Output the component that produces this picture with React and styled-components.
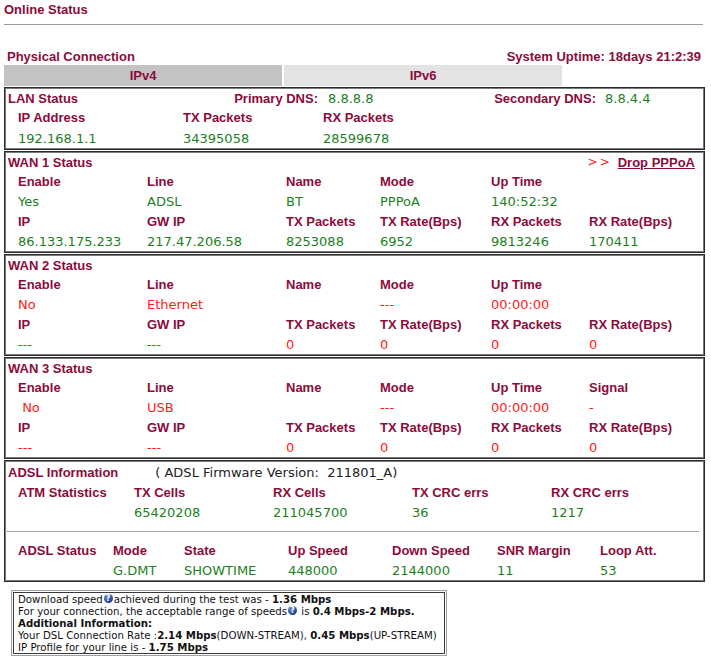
import styled, { createGlobalStyle } from 'styled-components'

const MAROON = '#8c0b3a'
const GREEN = '#1d7f1d'
const RED = '#ff1a1a'

const GlobalStyle = createGlobalStyle`
    body {
        margin: 0;
        background: #fff;
        font-family: "Liberation Sans", Arial, sans-serif;
    }
`

const wanCols = '129px 139px 94px 111px 98px 1fr'
const atmCols = '116px 139px 139px 139px 1fr'
const adslCols = '95px 71px 104px 104px 105px 103px 1fr'

const App = () => {
    return (
        <Page>
            <GlobalStyle />
            <PageTitle>Online Status</PageTitle>
            <Rule />

            <SectionBar>
                <Label>Physical Connection</Label>
                <Label>System Uptime: 18days 21:2:39</Label>
            </SectionBar>

            <Tabs>
                <Tab $active>IPv4</Tab>
                <Tab>IPv6</Tab>
            </Tabs>

            {/* LAN */}
            <Panel>
                <TitleRow>
                    <LanGrid>
                        <Label>LAN Status</Label>
                        <Label $right>Primary DNS:</Label>
                        <Value $tone="green" $indent={10}>8.8.8.8</Value>
                        <Label $right>Secondary DNS:</Label>
                        <Value $tone="green" $indent={9}>8.8.4.4</Value>
                    </LanGrid>
                </TitleRow>
                <Row $cols="165px 140px 1fr">
                    <Label>IP Address</Label>
                    <Label>TX Packets</Label>
                    <Label>RX Packets</Label>
                </Row>
                <Row $cols="165px 140px 1fr" $h={21}>
                    <Value $tone="green">192.168.1.1</Value>
                    <Value $tone="green">34395058</Value>
                    <Value $tone="green">28599678</Value>
                </Row>
            </Panel>

            {/* WAN 1 */}
            <Panel>
                <TitleRow>
                    <Label>WAN 1 Status</Label>
                    <DropLink>
                        <Arrows>&gt;&gt;</Arrows>
                        <u>Drop PPPoA</u>
                    </DropLink>
                </TitleRow>
                <Row $cols={wanCols}>
                    <Label>Enable</Label>
                    <Label>Line</Label>
                    <Label>Name</Label>
                    <Label>Mode</Label>
                    <Label>Up Time</Label>
                    <span />
                </Row>
                <Row $cols={wanCols}>
                    <Value $tone="green">Yes</Value>
                    <Value $tone="green">ADSL</Value>
                    <Value $tone="green">BT</Value>
                    <Value $tone="green">PPPoA</Value>
                    <Value $tone="green">140:52:32</Value>
                    <span />
                </Row>
                <Row $cols={wanCols}>
                    <Label>IP</Label>
                    <Label>GW IP</Label>
                    <Label>TX Packets</Label>
                    <Label>TX Rate(Bps)</Label>
                    <Label>RX Packets</Label>
                    <Label>RX Rate(Bps)</Label>
                </Row>
                <Row $cols={wanCols}>
                    <Value $tone="green">86.133.175.233</Value>
                    <Value $tone="green">217.47.206.58</Value>
                    <Value $tone="green">8253088</Value>
                    <Value $tone="green">6952</Value>
                    <Value $tone="green">9813246</Value>
                    <Value $tone="green">170411</Value>
                </Row>
            </Panel>

            {/* WAN 2 */}
            <Panel>
                <TitleRow>
                    <Label>WAN 2 Status</Label>
                </TitleRow>
                <Row $cols={wanCols}>
                    <Label>Enable</Label>
                    <Label>Line</Label>
                    <Label>Name</Label>
                    <Label>Mode</Label>
                    <Label>Up Time</Label>
                    <span />
                </Row>
                <Row $cols={wanCols}>
                    <Value $tone="red">No</Value>
                    <Value $tone="red">Ethernet</Value>
                    <Value $tone="red"></Value>
                    <Value $tone="red">---</Value>
                    <Value $tone="red">00:00:00</Value>
                    <span />
                </Row>
                <Row $cols={wanCols}>
                    <Label>IP</Label>
                    <Label>GW IP</Label>
                    <Label>TX Packets</Label>
                    <Label>TX Rate(Bps)</Label>
                    <Label>RX Packets</Label>
                    <Label>RX Rate(Bps)</Label>
                </Row>
                <Row $cols={wanCols}>
                    <Value $tone="red">---</Value>
                    <Value $tone="red">---</Value>
                    <Value $tone="red">0</Value>
                    <Value $tone="red">0</Value>
                    <Value $tone="red">0</Value>
                    <Value $tone="red">0</Value>
                </Row>
            </Panel>

            {/* WAN 3 */}
            <Panel>
                <TitleRow>
                    <Label>WAN 3 Status</Label>
                </TitleRow>
                <Row $cols={wanCols}>
                    <Label>Enable</Label>
                    <Label>Line</Label>
                    <Label>Name</Label>
                    <Label>Mode</Label>
                    <Label>Up Time</Label>
                    <Label>Signal</Label>
                </Row>
                <Row $cols={wanCols}>
                    <Value $tone="red">{'\u00a0No'}</Value>
                    <Value $tone="red">USB</Value>
                    <Value $tone="red"></Value>
                    <Value $tone="red">---</Value>
                    <Value $tone="red">00:00:00</Value>
                    <Value $tone="red">-</Value>
                </Row>
                <Row $cols={wanCols}>
                    <Label>IP</Label>
                    <Label>GW IP</Label>
                    <Label>TX Packets</Label>
                    <Label>TX Rate(Bps)</Label>
                    <Label>RX Packets</Label>
                    <Label>RX Rate(Bps)</Label>
                </Row>
                <Row $cols={wanCols}>
                    <Value $tone="red">---</Value>
                    <Value $tone="red">---</Value>
                    <Value $tone="red">0</Value>
                    <Value $tone="red">0</Value>
                    <Value $tone="red">0</Value>
                    <Value $tone="red">0</Value>
                </Row>
            </Panel>

            {/* ADSL */}
            <Panel>
                <TitleRow $h={20}>
                    <Label>ADSL Information</Label>
                    <Firmware>( ADSL Firmware Version:&nbsp; 211801_A)</Firmware>
                </TitleRow>
                <Row $cols={atmCols}>
                    <Label>ATM Statistics</Label>
                    <Label>TX Cells</Label>
                    <Label>RX Cells</Label>
                    <Label>TX CRC errs</Label>
                    <Label>RX CRC errs</Label>
                </Row>
                <Row $cols={atmCols}>
                    <span />
                    <Value $tone="green">65420208</Value>
                    <Value $tone="green">211045700</Value>
                    <Value $tone="green">36</Value>
                    <Value $tone="green">1217</Value>
                </Row>
                <Divider />
                <Row $cols={adslCols}>
                    <Label>ADSL Status</Label>
                    <Label>Mode</Label>
                    <Label>State</Label>
                    <Label>Up Speed</Label>
                    <Label>Down Speed</Label>
                    <Label>SNR Margin</Label>
                    <Label>Loop Att.</Label>
                </Row>
                <Row $cols={adslCols}>
                    <span />
                    <Value $tone="green">G.DMT</Value>
                    <Value $tone="green">SHOWTIME</Value>
                    <Value $tone="green">448000</Value>
                    <Value $tone="green">2144000</Value>
                    <Value $tone="green">11</Value>
                    <Value $tone="green">53</Value>
                </Row>
            </Panel>

            <InfoBox>
                <div>Download speed<Help>?</Help>achieved during the test was - <b>1.36 Mbps</b></div>
                <div>For your connection, the acceptable range of speeds<Help>?</Help> is <b>0.4 Mbps-2 Mbps.</b></div>
                <div><b>Additional Information:</b></div>
                <div>Your DSL Connection Rate :<b>2.14 Mbps</b>(DOWN-STREAM), <b>0.45 Mbps</b>(UP-STREAM)</div>
                <div>IP Profile for your line is - <b>1.75 Mbps</b></div>
            </InfoBox>
        </Page>
    );
};

const Page = styled.div`
    width: 701px;
    padding: 2px 4px 0 4px;
`;

const Label = styled.span`
    font-family: "Liberation Sans", Arial, sans-serif;
    font-weight: bold;
    font-size: 13px;
    color: ${MAROON};
    white-space: nowrap;
    text-align: ${p => (p.$right ? 'right' : 'left')};
`;

const PageTitle = styled(Label)`
    display: block;
    line-height: 16px;
`;

const Rule = styled.div`
    height: 1px;
    margin: 6px 2px 0 0;
    background: #9a9a9a;
`;

const SectionBar = styled.div`
    display: flex;
    justify-content: space-between;
    align-items: center;
    height: 16px;
    margin-top: 23px;
    padding: 0 4px 0 3px;
`;

const Tabs = styled.div`
    display: flex;
    gap: 2px;
    margin-top: 1px;
`;

const Tab = styled.div`
    width: 278px;
    height: 21px;
    display: flex;
    align-items: center;
    justify-content: center;
    background: ${p => (p.$active ? '#c3c3c3' : '#e3e3e3')};
    font-weight: bold;
    font-size: 13px;
    color: ${MAROON};
`;

const Panel = styled.div`
    border: 1px solid #2a2a2a;
    box-shadow: inset 0 0 0 1px #7a7a7a;
    padding: 1px;
    margin-top: 1px;
`;

const Row = styled.div`
    display: grid;
    grid-template-columns: ${p => p.$cols};
    align-items: center;
    height: ${p => p.$h || 20}px;
    padding-left: 12px;
    padding-top: 1px;
    box-sizing: border-box;
`;

const TitleRow = styled.div`
    display: flex;
    align-items: center;
    height: ${p => p.$h || 18}px;
    padding: 0 8px 0 2px;
`;

const LanGrid = styled.div`
    flex: 1;
    display: grid;
    grid-template-columns: 110px 200px 166px 112px 1fr;
    align-items: center;
`;

const Value = styled.span`
    font-family: "DejaVu Sans", Verdana, sans-serif;
    font-size: 13px;
    white-space: pre;
    padding-left: ${p => p.$indent || 0}px;
    color: ${p => (p.$tone === 'red' ? RED : p.$tone === 'green' ? GREEN : '#222')};
`;

const DropLink = styled.span`
    display: flex;
    align-items: center;
    gap: 6px;
    margin-left: auto;
    font-weight: bold;
    font-size: 13px;
    color: ${MAROON};
`;

const Arrows = styled.span`
    font-family: "DejaVu Sans", Verdana, sans-serif;
    font-weight: normal;
    font-size: 12px;
    letter-spacing: 2px;
    color: ${RED};
`;

const Firmware = styled.span`
    font-family: "DejaVu Sans", Verdana, sans-serif;
    font-size: 13px;
    color: #222;
    margin-left: 37px;
    white-space: pre;
`;

const Divider = styled.div`
    height: 18px;
    display: flex;
    align-items: center;
    margin: 0 4px 0 -1px;

    &::after {
        content: '';
        flex: 1;
        height: 1px;
        background: #a8a8a8;
    }
`;

const InfoBox = styled.div`
    display: inline-block;
    margin: 8px 0 0 7px;
    padding: 3px 9px 1px 6px;
    border: 1px solid #a0a0a0;
    box-shadow: inset 0 0 0 1px #fff, inset 0 0 0 2px #3a3a3a;
    font-family: "DejaVu Sans", Verdana, sans-serif;
    font-size: 10.2px;
    line-height: 12px;
    color: #111;
`;

const Help = styled.span`
    display: inline-block;
    width: 9px;
    height: 9px;
    border-radius: 50%;
    background: radial-gradient(circle at 35% 30%, #6f8fd8, #1f3f8f 70%);
    color: #fff;
    font-size: 8px;
    line-height: 9px;
    font-weight: bold;
    text-align: center;
    vertical-align: 2px;
    margin: 0 1px;
`;

export default App;
